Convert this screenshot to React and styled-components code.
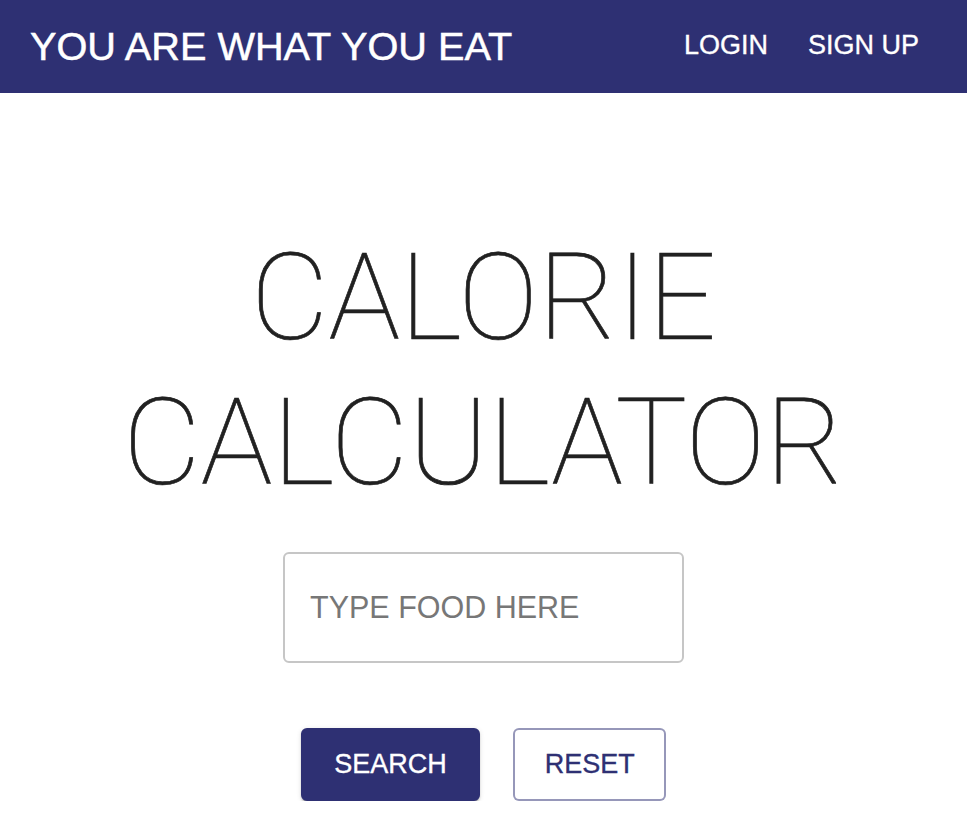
import React from 'react';
import styled, { createGlobalStyle } from 'styled-components';

const NAVY = '#2e3073';

const GlobalStyle = createGlobalStyle`
  html, body {
    margin: 0;
    padding: 0;
    background: #fff;
  }
  body {
    font-family: "Liberation Sans", Arial, sans-serif;
  }
  * {
    box-sizing: border-box;
  }
`;

const Header = styled.header`
  height: 93px;
  background: ${NAVY};
  color: #fff;
  display: flex;
  align-items: center;
  justify-content: space-between;
  padding: 0 48px 0 30px;
`;

const Brand = styled.div`
  font-size: 39.7px;
  line-height: 1;
  text-transform: uppercase;
  white-space: nowrap;
  -webkit-text-stroke: 0.5px #fff;
`;

const Nav = styled.nav`
  display: flex;
  gap: 40px;
  margin-top: -3px;
`;

const NavLink = styled.a`
  color: #fff;
  font-size: 27px;
  text-decoration: none;
  text-transform: uppercase;
  cursor: pointer;
  -webkit-text-stroke: 0.35px #fff;
`;

const Main = styled.main`
  display: flex;
  flex-direction: column;
  align-items: center;
  padding-top: 133px;
`;

// thin face thickened a little to sit between Roboto Thin and Light
const Title = styled.h1`
  margin: 0;
  font-family: Roboto, "Liberation Sans", sans-serif;
  font-weight: 100;
  font-size: 120px;
  line-height: 145px;
  letter-spacing: 0;
  color: #212121;
  -webkit-text-stroke: 0.7px #212121;
  text-align: center;
  text-transform: uppercase;
`;

const SearchField = styled.input`
  margin-top: 36px;
  width: 401px;
  height: 111px;
  border: 2px solid #c6c6c6;
  border-radius: 6px;
  padding: 0 25px;
  font-family: "Liberation Sans", Arial, sans-serif;
  font-size: 30.5px;
  color: #333;
  outline: none;

  &::placeholder {
    color: #777;
    text-transform: uppercase;
  }
`;

const Actions = styled.div`
  display: flex;
  gap: 33px;
  margin-top: 65px;
`;

const Button = styled.button`
  height: 73px;
  padding: 0 ${({ primary }) => (primary ? 31.5 : 29.5)}px;
  border-radius: 6px;
  font-family: "Liberation Sans", Arial, sans-serif;
  font-size: 27px;
  text-transform: uppercase;
  cursor: pointer;
  background: ${({ primary }) => (primary ? NAVY : '#fff')};
  color: ${({ primary }) => (primary ? '#fff' : NAVY)};
  -webkit-text-stroke: 0.35px currentColor;
  border: 2px solid ${({ primary }) => (primary ? NAVY : 'rgba(46, 48, 115, 0.5)')};
  box-shadow: ${({ primary }) =>
    primary
      ? '0 3px 1px -2px rgba(0,0,0,0.2), 0 2px 2px 0 rgba(0,0,0,0.14), 0 1px 5px 0 rgba(0,0,0,0.12)'
      : 'none'};
`;

export default function App() {
  return (
    <>
      <GlobalStyle />
      <Header>
        <Brand>You are what you eat</Brand>
        <Nav>
          <NavLink>Login</NavLink>
          <NavLink>Sign up</NavLink>
        </Nav>
      </Header>
      <Main>
        <Title>
          Calorie
          <br />
          Calculator
        </Title>
        <SearchField placeholder="Type food here" />
        <Actions>
          <Button primary>Search</Button>
          <Button>Reset</Button>
        </Actions>
      </Main>
    </>
  );
}
